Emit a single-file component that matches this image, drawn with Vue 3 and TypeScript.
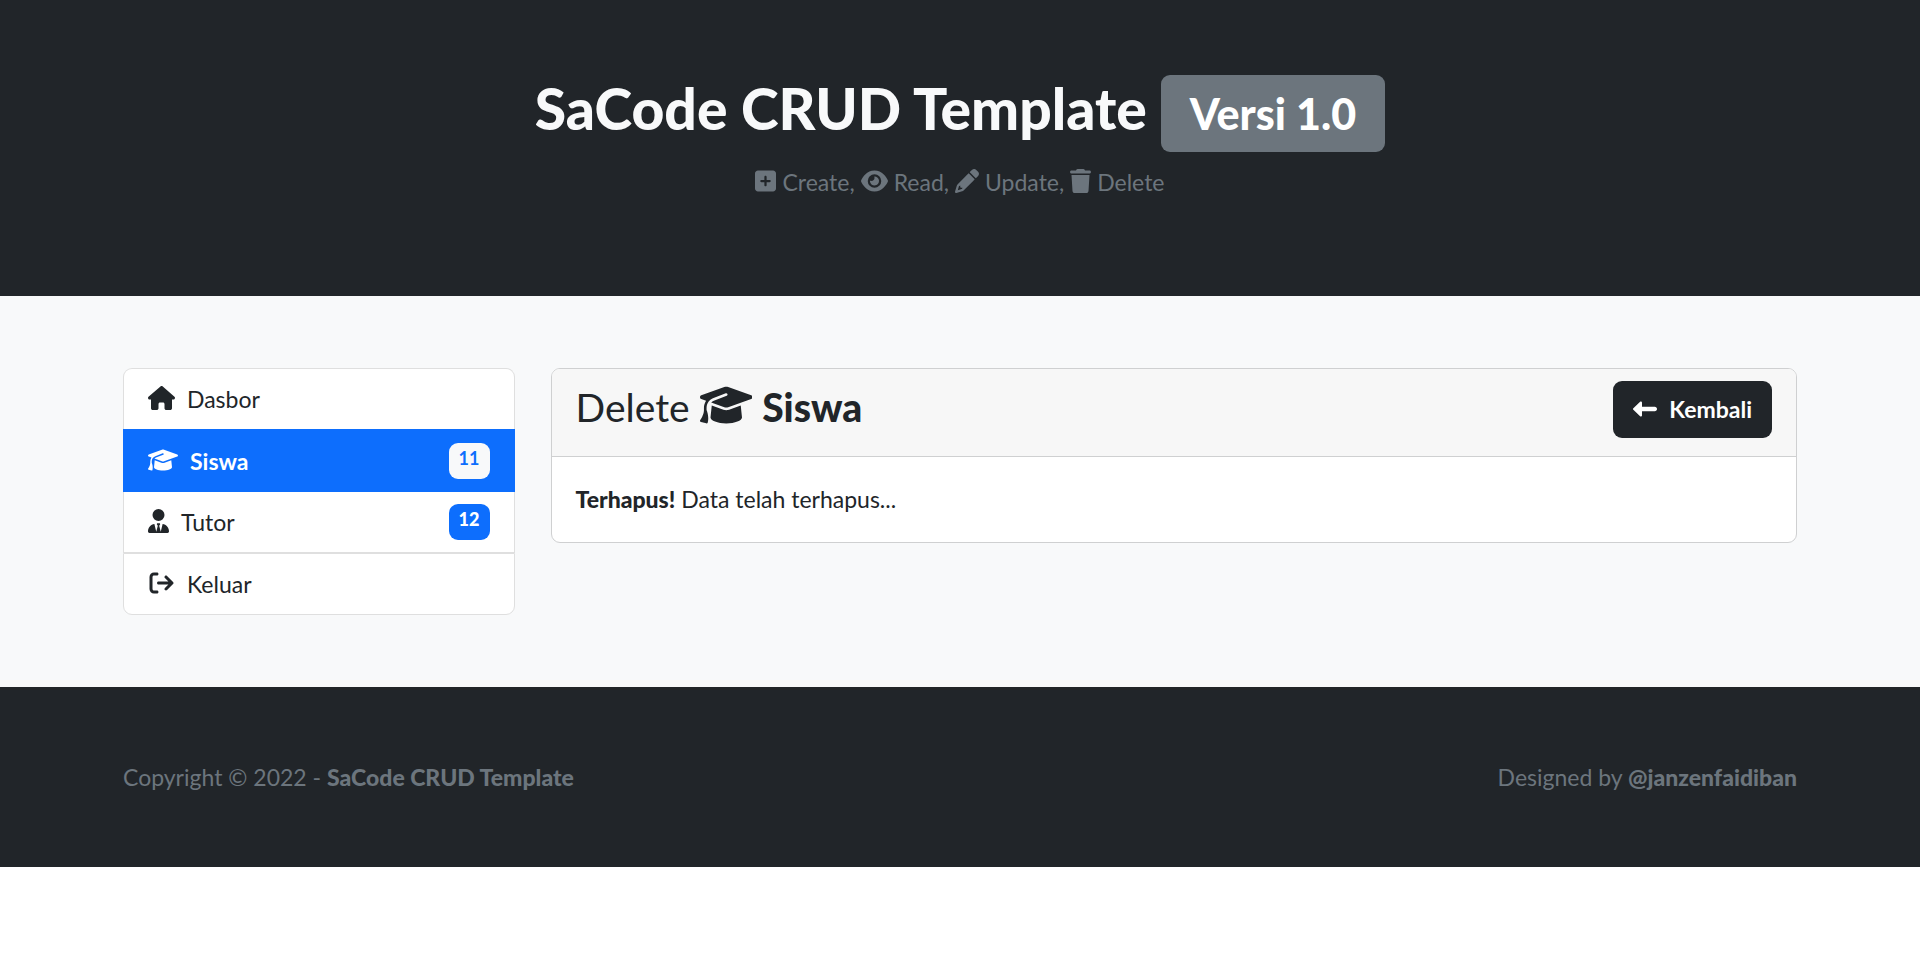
<script setup lang="ts">
interface Glyph {
  box: string
  path: string
}

interface MenuItem {
  label: string
  icon: string
  active?: boolean
  count?: number
}

const glyphs: Record<string, Glyph> = {
  plus: {
    box: '0 0 448 512',
    path: 'M64 32C28.7 32 0 60.7 0 96V416c0 35.3 28.7 64 64 64H384c35.3 0 64-28.7 64-64V96c0-35.3-28.7-64-64-64H64zM200 344V280H136c-13.3 0-24-10.7-24-24s10.7-24 24-24h64V168c0-13.3 10.7-24 24-24s24 10.7 24 24v64h64c13.3 0 24 10.7 24 24s-10.7 24-24 24H248v64c0 13.3-10.7 24-24 24s-24-10.7-24-24z',
  },
  eye: {
    box: '0 0 576 512',
    path: 'M288 32c-80.8 0-145.5 36.8-192.6 80.6C48.6 156 17.3 208 2.5 243.7c-3.3 7.9-3.3 16.7 0 24.6C17.3 304 48.6 356 95.4 399.4C142.5 443.2 207.2 480 288 480s145.5-36.8 192.6-80.6c46.8-43.5 78.1-95.4 93-131.1c3.3-7.9 3.3-16.7 0-24.6c-14.9-35.7-46.2-87.7-93-131.1C433.5 68.8 368.8 32 288 32zM144 256a144 144 0 1 1 288 0 144 144 0 1 1 -288 0zm144-64c0 35.3-28.7 64-64 64c-7.1 0-13.9-1.2-20.3-3.3c-5.5-1.8-11.9 1.6-11.7 7.4c.3 6.9 1.3 13.8 3.2 20.7c13.7 51.2 66.4 81.6 117.6 67.9s81.6-66.4 67.9-117.6c-11.1-41.5-47.8-69.4-88.6-71.1c-5.8-.2-9.2 6.1-7.4 11.7c2.1 6.4 3.3 13.2 3.3 20.3z',
  },
  pencil: {
    box: '0 0 512 512',
    path: 'M410.3 231l11.3-11.3-33.9-33.9-62.1-62.1L291.7 89.8l-11.3 11.3-22.6 22.6L58.6 322.9c-10.4 10.4-18 23.3-22.2 37.4L1 480.7c-2.5 8.4-.2 17.5 6.1 23.7s15.3 8.5 23.7 6.1l120.3-35.4c14.1-4.2 27-11.8 37.4-22.2L387.7 253.7 410.3 231zM160 399.4l-9.1 22.7c-4 3.1-8.5 5.4-13.3 6.9L59.4 452l23-78.1c1.4-4.9 3.8-9.4 6.9-13.3l22.7-9.1v32c0 8.8 7.2 16 16 16h32zM362.7 18.7L348.3 33.2 325.7 55.8 314.3 67.1l33.9 33.9 62.1 62.1 33.9 33.9 11.3-11.3 22.6-22.6 14.5-14.5c25-25 25-65.5 0-90.5L453.3 18.7c-25-25-65.5-25-90.5 0z',
  },
  trash: {
    box: '0 0 448 512',
    path: 'M135.2 17.7L128 32H32C14.3 32 0 46.3 0 64S14.3 96 32 96H416c17.7 0 32-14.3 32-32s-14.3-32-32-32H320l-7.2-14.3C307.4 6.8 296.3 0 284.2 0H163.8c-12.1 0-23.2 6.8-28.6 17.7zM416 128H32L53.2 467c1.6 25.3 22.6 45 47.9 45H346.9c25.3 0 46.3-19.7 47.9-45L416 128z',
  },
  house: {
    box: '0 0 576 512',
    path: 'M575.8 255.5c0 18-15 32.1-32 32.1h-32l.7 160.2c0 2.7-.2 5.4-.5 8.1V472c0 22.1-17.9 40-40 40H456c-1.1 0-2.2 0-3.3-.1c-1.4 .1-2.8 .1-4.2 .1H416 392c-22.1 0-40-17.9-40-40V448 384c0-17.7-14.3-32-32-32H256c-17.7 0-32 14.3-32 32v64 24c0 22.1-17.9 40-40 40H160 128.1c-1.5 0-3-.1-4.5-.2c-1.2 .1-2.4 .2-3.6 .2H104c-22.1 0-40-17.9-40-40V360c0-.9 0-1.9 .1-2.8V287.6H32c-18 0-32-14-32-32.1c0-9 3-17 10-24L266.4 8c7-7 15-8 22-8s15 2 21 7L564.8 231.5c8 7 12 15 11 24z',
  },
  cap: {
    box: '0 0 640 512',
    path: 'M320 32c-8.1 0-16.1 1.4-23.7 4.1L15.8 137.4C6.3 140.9 0 149.9 0 160s6.3 19.1 15.8 22.6l57.9 20.9C57.3 229.3 48 259.8 48 291.9v28.1c0 28.4-10.8 57.7-22.3 80.8c-6.5 13-13.9 25.8-22.5 37.6C0 442.7-.9 448.3 .9 453.4s6 8.9 11.2 10.2l64 16c4.2 1.1 8.7 .3 12.4-2s6.3-6.1 7.1-10.4c8.6-42.8 4.3-81.2-2.1-108.7C90.3 344.3 86 329.8 80 316.5V291.9c0-30.2 10.2-58.7 27.9-81.5c12.9-15.5 29.6-28 49.2-35.7l157-61.7c8.2-3.2 17.5 .8 20.7 9s-.8 17.5-9 20.7l-157 61.7c-12.4 4.9-23.3 12.4-32.2 21.6l159.6 57.6c7.6 2.7 15.6 4.1 23.7 4.1s16.1-1.4 23.7-4.1L624.2 182.6c9.5-3.4 15.8-12.5 15.8-22.6s-6.3-19.1-15.8-22.6L343.7 36.1C336.1 33.4 328.1 32 320 32zM128 408c0 35.3 86 72 192 72s192-36.7 192-72L496.7 262.6 354.5 314c-11.1 4-22.8 6-34.5 6s-23.5-2-34.5-6L143.3 262.6 128 408z',
  },
  tutor: {
    box: '0 0 448 512',
    path: 'M224 256A128 128 0 1 1 224 0a128 128 0 1 1 0 256zM209.1 359.2l-18.6-31c-6.4-10.7 1.3-24.2 13.7-24.2H224h19.7c12.4 0 20.1 13.6 13.7 24.2l-18.6 31 33.4 123.9 39.5-161.2c77.2 12 136.3 78.8 136.3 159.4c0 17-13.8 30.7-30.7 30.7H265.5 182.5 30.7C13.8 512 0 498.2 0 481.3c0-80.6 59.1-147.4 136.3-159.4l39.5 161.2 33.4-123.9z',
  },
  exit: {
    box: '-32 0 576 512',
    path: 'M502.6 278.6c12.5-12.5 12.5-32.8 0-45.3l-128-128c-12.5-12.5-32.8-12.5-45.3 0s-12.5 32.8 0 45.3L402.7 224 192 224c-17.7 0-32 14.3-32 32s14.3 32 32 32l210.7 0-73.4 73.4c-12.5 12.5-12.5 32.8 0 45.3s32.8 12.5 45.3 0l128-128zM160 96c17.7 0 32-14.3 32-32s-14.3-32-32-32L96 32C43 32 0 75 0 128L0 384c0 53 43 96 96 96l64 0c17.7 0 32-14.3 32-32s-14.3-32-32-32l-64 0c-17.7 0-32-14.3-32-32l0-256c0-17.7 14.3-32 32-32l64 0z',
  },
  back: {
    box: '0 0 512 512',
    path: 'M177.5 414c-8.8 3.8-19 2-26-4.6l-144-136C2.7 268.9 0 262.6 0 256s2.7-12.9 7.5-17.4l144-136c7-6.6 17.2-8.4 26-4.6s14.5 12.5 14.5 22l0 88 272 0c26.5 0 48 21.5 48 48s-21.5 48-48 48l-272 0 0 88c0 9.6-5.7 18.2-14.5 22z',
  },
}

const actions = [
  { icon: 'plus', label: 'Create,' },
  { icon: 'eye', label: 'Read,' },
  { icon: 'pencil', label: 'Update,' },
  { icon: 'trash', label: 'Delete' },
]

const menu: MenuItem[] = [
  { label: 'Dasbor', icon: 'house' },
  { label: 'Siswa', icon: 'cap', active: true, count: 11 },
  { label: 'Tutor', icon: 'tutor', count: 12 },
  { label: 'Keluar', icon: 'exit' },
]
</script>

<template>
  <div class="page">
    <header class="hero">
      <h1 class="hero-title">
        <span>SaCode CRUD Template</span>
        <span class="version">Versi 1.0</span>
      </h1>
      <p class="actions">
        <span v-for="action in actions" :key="action.icon" class="action">
          <svg class="icon" :viewBox="glyphs[action.icon].box" aria-hidden="true"><path :d="glyphs[action.icon].path" /></svg>
          <span>{{ action.label }}</span>
        </span>
      </p>
    </header>

    <main class="content">
      <div class="row">
        <nav class="menu">
          <a
            v-for="item in menu"
            :key="item.label"
            href="#"
            class="menu-item"
            :class="{ active: item.active }"
          >
            <svg class="icon" :viewBox="glyphs[item.icon].box" aria-hidden="true"><path :d="glyphs[item.icon].path" /></svg>
            <span>{{ item.label }}</span>
            <span v-if="item.count" class="count">{{ item.count }}</span>
          </a>
        </nav>

        <section class="card">
          <div class="card-header">
            <h2 class="card-title">
              <span>Delete</span>
              <svg class="icon" :viewBox="glyphs.cap.box" aria-hidden="true"><path :d="glyphs.cap.path" /></svg>
              <strong>Siswa</strong>
            </h2>
            <button type="button" class="back">
              <svg class="icon" :viewBox="glyphs.back.box" aria-hidden="true"><path :d="glyphs.back.path" /></svg>
              <span>Kembali</span>
            </button>
          </div>
          <p class="card-body"><strong>Terhapus!</strong> Data telah terhapus...</p>
        </section>
      </div>
    </main>

    <footer class="footer">
      <span>Copyright © 2022 - <strong>SaCode CRUD Template</strong></span>
      <span>Designed by <strong>@janzenfaidiban</strong></span>
    </footer>
  </div>
</template>

<style>
body {
  margin: 0;
  background: #fff;
}
</style>

<style scoped>
.page {
  color: #212529;
  font-family: Lato, "Open Sans", sans-serif;
  font-size: 23px;
  line-height: 36px;
}

.page * {
  box-sizing: border-box;
}

strong {
  font-weight: 900;
}

.icon {
  flex: none;
  width: auto;
  height: 24px;
  margin-bottom: 2px;
  fill: currentColor;
}

.hero {
  padding: 72px 24px 96px;
  background: #212529;
  text-align: center;
}

.hero-title {
  display: flex;
  flex-wrap: wrap;
  align-items: baseline;
  justify-content: center;
  gap: 14px;
  margin: 0 0 12px;
  color: #f8f9fa;
  font-size: 57px;
  font-weight: 900;
  line-height: 72px;
}

.version {
  padding: 16px 29px;
  border-radius: 9px;
  background: #6c757d;
  color: #fff;
  font-size: 43px;
  line-height: 45px;
}

.actions {
  display: flex;
  flex-wrap: wrap;
  justify-content: center;
  gap: 6px;
  margin: 0;
  color: #6c757d;
}

.action {
  display: flex;
  align-items: center;
  gap: 6px;
}

.content {
  padding: 72px 123px;
  background: #f8f9fa;
}

.row {
  display: grid;
  grid-template-columns: repeat(12, minmax(0, 1fr));
  align-items: start;
  gap: 36px;
}

.menu {
  grid-column: span 3;
  display: flex;
  flex-direction: column;
}

.menu-item {
  display: flex;
  align-items: center;
  gap: 12px;
  padding: 12px 24px;
  border: 1px solid #dfdfdf;
  border-top-width: 0;
  background: #fff;
  color: #212529;
  text-decoration: none;
}

.menu-item:first-child {
  border-top-width: 1px;
  border-bottom-width: 0;
  border-radius: 9px 9px 0 0;
}

.menu-item:last-child {
  border-top-width: 1px;
  border-radius: 0 0 9px 9px;
}

.menu-item.active {
  border-width: 2px 1px 1px;
  border-color: #0d6efd;
  background: #0d6efd;
  color: #fff;
  font-weight: 700;
}

.count {
  margin-left: auto;
  padding: 6px 10px 12px;
  border-radius: 9px;
  background: #0d6efd;
  color: #fff;
  font-size: 18px;
  font-weight: 900;
  line-height: 18px;
}

.active .count {
  background: #f8f9fa;
  color: #0d6efd;
  font-weight: 700;
}

.card {
  grid-column: span 9;
  overflow: hidden;
  border: 1px solid #cfd0d1;
  border-radius: 9px;
  background: #fff;
}

.card-header {
  display: flex;
  align-items: flex-start;
  justify-content: space-between;
  padding: 12px 24px 18px;
  border-bottom: 1px solid #cfd0d1;
  background: #f7f7f7;
}

.card-title {
  display: flex;
  align-items: center;
  gap: 10px;
  margin: 0;
  font-size: 39px;
  font-weight: 400;
  line-height: 52px;
}

.card-title .icon {
  height: 42px;
  margin-bottom: 4px;
}

.back {
  display: flex;
  align-items: center;
  gap: 12px;
  padding: 10px 20px;
  border: 0;
  border-radius: 9px;
  background: #212529;
  color: #fff;
  font: inherit;
  font-weight: 700;
  line-height: 37px;
}

.card-body {
  margin: 0;
  padding: 24px 24px 25px;
}

.footer {
  display: flex;
  flex-wrap: wrap;
  justify-content: space-between;
  padding: 72px 123px;
  background: #212529;
  color: #6c757d;
}
</style>
